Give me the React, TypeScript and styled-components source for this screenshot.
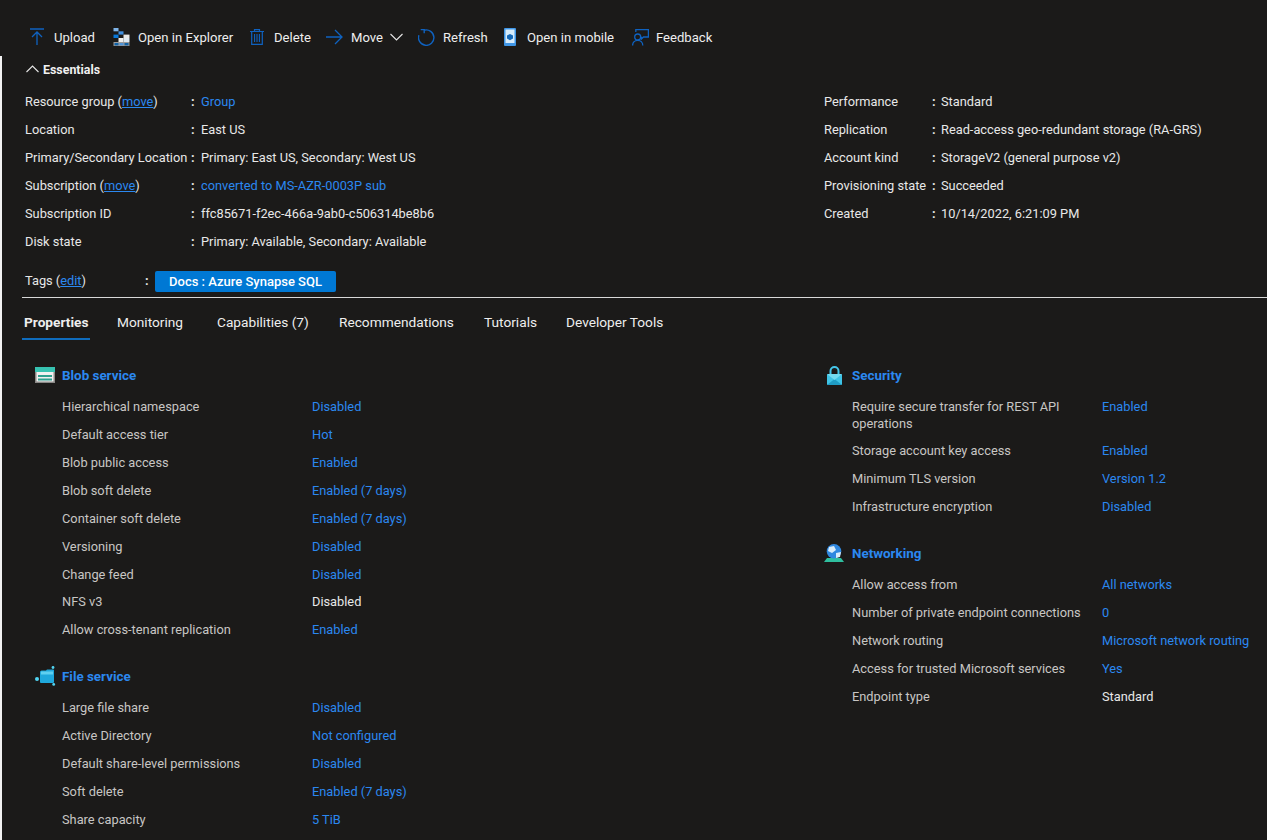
import React from "react"
import styled, { createGlobalStyle } from "styled-components"

const Global = createGlobalStyle`
  html, body {
    margin: 0;
    height: 100%;
    overflow: hidden;
    background: #1b1a19;
  }
  body {
    font-family: Roboto, "Open Sans", "Liberation Sans", sans-serif;
    font-size: 12.8px;
    color: #e6e6e6;
  }
  * { box-sizing: border-box; }
`

const BLUE = "#0f62c0"
const LINK = "#2b88f0"

const Toolbar = styled.div`
  display: flex;
  align-items: center;
  height: 56px;
  padding: 18px 0 0 30px;
`

const ToolButton = styled.div<{ $w: number }>`
  display: flex;
  align-items: center;
  width: ${(p) => p.$w}px;
  height: 38px;
  flex: none;
  font-size: 13.1px;
  color: #eeeeee;
`

const ToolIcon = styled.span<{ $w: number; $gap?: number }>`
  display: flex;
  align-items: center;
  width: ${(p) => p.$w}px;
  margin-left: ${(p) => p.$gap ?? 0}px;
  flex: none;
`

const Body = styled.div`
  border-left: 2px solid #f2f2f2;
  padding-top: 1px;
  height: 784px;
`

const EssentialsHead = styled.div`
  display: flex;
  align-items: center;
  gap: 4px;
  height: 24px;
  padding-left: 24px;
  font-weight: 700;
  font-size: 12.4px;
  color: #f0f0f0;
`

const EssentialsGrid = styled.div`
  display: grid;
  grid-template-columns: 799px 1fr;
  padding: 6px 0 0 23px;
`

const EssColumn = styled.div`
  display: flex;
  flex-direction: column;
`

const EssRow = styled.div<{ $label: number; $colon: number }>`
  display: grid;
  grid-template-columns: ${(p) => p.$label}px ${(p) => p.$colon}px 1fr;
  align-items: center;
  height: 28px;
`

const EssLabel = styled.span`
  white-space: nowrap;
  color: #e8e8e8;
`

const Colon = styled.span`
  font-weight: 700;
`

const A = styled.a`
  color: ${LINK};
`

const Value = styled.span<{ $link?: boolean }>`
  color: ${(p) => (p.$link ? LINK : "#e8e8e8")};
  white-space: nowrap;
`

const TagsRow = styled.div`
  display: flex;
  align-items: center;
  height: 28px;
  margin-top: 12px;
  padding-left: 23px;
`

const TagsLabel = styled.span`
  width: 120px;
  position: relative;
  top: -1px;
`

const TagColon = styled(Colon)`
  width: 10px;
  position: relative;
  top: -1px;
`

const Tag = styled.span`
  display: flex;
  align-items: center;
  justify-content: center;
  width: 181px;
  height: 21px;
  border-radius: 2px;
  background: #0078d4;
  color: #fff;
  font-weight: 500;
  font-size: 13px;
`

const Divider = styled.div`
  height: 1px;
  margin: 2px 0 0 20px;
  background: #d8d8d8;
`

const Tabs = styled.div`
  display: flex;
  height: 42px;
  padding-left: 20px;
`

const Tab = styled.div<{ $active?: boolean; $w: number }>`
  width: ${(p) => p.$w}px;
  flex: none;
  display: flex;
  height: 42px;
  font-size: 13.7px;
  font-weight: ${(p) => (p.$active ? 700 : 400)};
  color: #eeeeee;
  span {
    display: flex;
    align-items: center;
    height: 100%;
    padding: 7px 2px 0;
    border-bottom: 2px solid ${(p) => (p.$active ? "#0f6cbd" : "transparent")};
  }
`

const Columns = styled.div`
  display: grid;
  grid-template-columns: 790px 1fr;
  padding: 23px 0 0 33px;
`

const Section = styled.section`
  margin-bottom: 21px;
`

const SectionHead = styled.div`
  display: flex;
  align-items: center;
  height: 24px;
  margin-bottom: 5px;
  font-weight: 700;
  font-size: 13.4px;
  color: ${LINK};
`

const SectionIcon = styled.span`
  display: flex;
  align-items: center;
  width: 27px;
  flex: none;
`

const PropRow = styled.div<{ $h?: number }>`
  display: grid;
  grid-template-columns: 250px 1fr;
  align-items: ${(p) => (p.$h && p.$h > 40 ? "start" : "center")};
  height: ${(p) => p.$h ?? 28}px;
  margin-left: 27px;
  line-height: 17px;
  padding-top: ${(p) => (p.$h && p.$h > 40 ? "6px" : "0")};
`

const PropLabel = styled.span`
  color: #c8c6c4;
  width: 245px;
`

const UploadIcon = () => (
  <svg width="14" height="18" viewBox="0 0 14 18" fill="none" stroke={BLUE} strokeWidth="1.3">
    <path d="M0 1h14M7 17V4M2 9l5-5 5 5" />
  </svg>
)

const ExplorerIcon = () => (
  <svg width="17" height="18" viewBox="0 0 16 18">
    <rect x="0" y="0" width="5" height="3.3" fill="#7fb4e8" />
    <rect x="5" y="3.3" width="5" height="3.3" fill="#3f8fe0" />
    <rect x="0" y="6.6" width="5" height="3.4" fill="#0a78d8" />
    <rect x="10" y="6.6" width="6" height="3.4" fill="#e8e8e8" />
    <rect x="5" y="10" width="5" height="4" fill="#eeeeee" />
    <rect x="10" y="10" width="6" height="4" fill="#dfe9f2" />
    <rect x="0" y="14" width="16" height="4" fill="#9a9a9a" />
    <rect x="1" y="15" width="4" height="2.4" fill="#0f62a8" />
    <rect x="6" y="15" width="4" height="2.4" fill="#4f94d8" />
    <rect x="11" y="15" width="4" height="2.4" fill="#0f62a8" />
  </svg>
)

const TrashIcon = () => (
  <svg width="14" height="16" viewBox="0 0 14 16" fill="none" stroke={BLUE} strokeWidth="1.2">
    <path d="M0 2.5h14M4.5 2.5V.7h5v1.8M1.7 2.5v12.8h10.6V2.5" />
    <path d="M4.6 5v8M7 5v8M9.4 5v8" strokeWidth="1.1" />
  </svg>
)

const ArrowIcon = () => (
  <svg width="17" height="16" viewBox="0 0 17 16" fill="none" stroke={BLUE} strokeWidth="1.3">
    <path d="M0 8h16M9 1l7 7-7 7" />
  </svg>
)

const Chevron = ({ up }: { up?: boolean }) => (
  <svg width="13" height="8" viewBox="0 0 13 8" fill="none" stroke="#e6e6e6" strokeWidth="1.1">
    <path d={up ? "M.5 7l6-6 6 6" : "M.5 1l6 6 6-6"} />
  </svg>
)

const RefreshIcon = () => (
  <svg width="17" height="17" viewBox="0 0 17 17" fill="none" stroke={BLUE} strokeWidth="1.4">
    <path d="M6.2 1.2A7.7 7.7 0 1 1 .9 6.2" />
    <path d="M2.7 .6h3.5v3.6" />
  </svg>
)

const MobileIcon = () => (
  <svg width="12" height="18" viewBox="0 0 12 18">
    <rect x="0" y="0" width="12" height="18" rx="1" fill="#3f96e6" />
    <rect x="1.5" y="1.5" width="9" height="13.5" fill="#d6ecfb" />
    <path d="M6 6l3 1.6v3L6 12.2 3 10.6v-3z" fill="#1368b8" />
  </svg>
)

const FeedbackIcon = () => (
  <svg width="17" height="17" viewBox="0 0 17 17" fill="none" stroke={BLUE} strokeWidth="1.3">
    <path d="M3.8 3V.6h12.6V8h-4.9l-2 2V7.8" />
    <circle cx="5.7" cy="8" r="3" />
    <path d="M.6 16.5c0-3 2.2-5.2 5.1-5.2s5.1 2.2 5.1 5.2" />
  </svg>
)

const BlobIcon = () => (
  <svg width="20" height="16" viewBox="0 0 20 16">
    <rect x="0" y="0" width="20" height="16" fill="#8a8886" />
    <rect x="0" y="0" width="20" height="5" fill="#37c2b1" />
    <rect x="1.5" y="5" width="17" height="9.5" fill="#f0f0f0" />
    <rect x="3" y="8" width="14" height="2" fill="#2fa08f" />
    <rect x="3" y="11.5" width="14" height="2" fill="#2fa08f" />
  </svg>
)

const FileIcon = () => (
  <svg width="21" height="20" viewBox="0 0 21 20">
    <circle cx="2" cy="13" r="2" fill="#50d4f2" />
    <circle cx="18" cy="1.5" r="1.4" fill="#50d4f2" />
    <circle cx="18.7" cy="18.4" r="1.4" fill="#50d4f2" />
    <path d="M5 6q0-1.5 1.5-1.5H11l1-1h6q1 0 1 1V16q0 1-1 1H6q-1 0-1-1z" fill="#1fa8dc" />
    <path d="M6 5.5h12v3H6z" fill="#5fd0f0" />
  </svg>
)

const LockIcon = () => (
  <svg width="15" height="19" viewBox="0 0 15 19" style={{ marginLeft: 2 }}>
    <path d="M3.5 8V5a4 4 0 0 1 8 0v3" fill="none" stroke="#45c6ea" strokeWidth="2" />
    <rect x="0" y="8" width="15" height="11" rx="1" fill="#3fc4e6" />
    <path d="M0 19l7.5-6 7.5 6z" fill="#1f9cc4" />
    <path d="M0 8l7.5 6 7.5-6z" fill="#73dcf2" />
  </svg>
)

const NetworkIcon = () => (
  <svg width="20" height="18" viewBox="0 0 20 18" style={{ marginLeft: -1 }}>
    <path d="M3 14h14l3 4H0z" fill="#2fbf9f" />
    <circle cx="10" cy="7.3" r="7.3" fill="#2f88e0" />
    <path d="M5 3l5-1 2 4-4 3-4-2zM12 9l5-1-1 5-4 1z" fill="#d8ecfa" />
  </svg>
)

type Prop = { label: string; value: string; plain?: boolean; h?: number }

const blobRows: Prop[] = [
  { label: "Hierarchical namespace", value: "Disabled" },
  { label: "Default access tier", value: "Hot" },
  { label: "Blob public access", value: "Enabled" },
  { label: "Blob soft delete", value: "Enabled (7 days)" },
  { label: "Container soft delete", value: "Enabled (7 days)" },
  { label: "Versioning", value: "Disabled" },
  { label: "Change feed", value: "Disabled" },
  { label: "NFS v3", value: "Disabled", plain: true, h: 27 },
  { label: "Allow cross-tenant replication", value: "Enabled" },
]

const fileRows: Prop[] = [
  { label: "Large file share", value: "Disabled" },
  { label: "Active Directory", value: "Not configured" },
  { label: "Default share-level permissions", value: "Disabled" },
  { label: "Soft delete", value: "Enabled (7 days)" },
  { label: "Share capacity", value: "5 TiB" },
]

const securityRows: Prop[] = [
  { label: "Require secure transfer for REST API operations", value: "Enabled", h: 44 },
  { label: "Storage account key access", value: "Enabled" },
  { label: "Minimum TLS version", value: "Version 1.2" },
  { label: "Infrastructure encryption", value: "Disabled" },
]

const networkRows: Prop[] = [
  { label: "Allow access from", value: "All networks" },
  { label: "Number of private endpoint connections", value: "0" },
  { label: "Network routing", value: "Microsoft network routing" },
  { label: "Access for trusted Microsoft services", value: "Yes" },
  { label: "Endpoint type", value: "Standard", plain: true },
]

const PropSection = ({ icon, title, rows }: { icon: React.ReactNode; title: string; rows: Prop[] }) => (
  <Section>
    <SectionHead>
      <SectionIcon>{icon}</SectionIcon>
      {title}
    </SectionHead>
    {rows.map((r) => (
      <PropRow key={r.label} $h={r.h}>
        <PropLabel>{r.label}</PropLabel>
        <Value $link={!r.plain}>{r.value}</Value>
      </PropRow>
    ))}
  </Section>
)

const App = () => (
  <>
    <Global />
    <Toolbar>
      <ToolButton $w={83}><ToolIcon $w={24}><UploadIcon /></ToolIcon>Upload</ToolButton>
      <ToolButton $w={137}><ToolIcon $w={25}><ExplorerIcon /></ToolIcon>Open in Explorer</ToolButton>
      <ToolButton $w={76}><ToolIcon $w={24}><TrashIcon /></ToolIcon>Delete</ToolButton>
      <ToolButton $w={92}>
        <ToolIcon $w={25}><ArrowIcon /></ToolIcon>
        Move
        <ToolIcon $w={13} $gap={7}><Chevron /></ToolIcon>
      </ToolButton>
      <ToolButton $w={86}><ToolIcon $w={25}><RefreshIcon /></ToolIcon>Refresh</ToolButton>
      <ToolButton $w={128}><ToolIcon $w={23}><MobileIcon /></ToolIcon>Open in mobile</ToolButton>
      <ToolButton $w={100}><ToolIcon $w={24}><FeedbackIcon /></ToolIcon>Feedback</ToolButton>
    </Toolbar>
    <Body>
      <EssentialsHead><Chevron up />Essentials</EssentialsHead>
      <EssentialsGrid>
        <EssColumn>
          <EssRow $label={166} $colon={10}><EssLabel>Resource group (<A href="#">move</A>)</EssLabel><Colon>:</Colon><Value $link>Group</Value></EssRow>
          <EssRow $label={166} $colon={10}><EssLabel>Location</EssLabel><Colon>:</Colon><Value>East US</Value></EssRow>
          <EssRow $label={166} $colon={10}><EssLabel>Primary/Secondary Location</EssLabel><Colon>:</Colon><Value>Primary: East US, Secondary: West US</Value></EssRow>
          <EssRow $label={166} $colon={10}><EssLabel>Subscription (<A href="#">move</A>)</EssLabel><Colon>:</Colon><Value $link>converted to MS-AZR-0003P sub</Value></EssRow>
          <EssRow $label={166} $colon={10}><EssLabel>Subscription ID</EssLabel><Colon>:</Colon><Value>ffc85671-f2ec-466a-9ab0-c506314be8b6</Value></EssRow>
          <EssRow $label={166} $colon={10}><EssLabel>Disk state</EssLabel><Colon>:</Colon><Value>Primary: Available, Secondary: Available</Value></EssRow>
        </EssColumn>
        <EssColumn>
          <EssRow $label={108} $colon={9}><EssLabel>Performance</EssLabel><Colon>:</Colon><Value>Standard</Value></EssRow>
          <EssRow $label={108} $colon={9}><EssLabel>Replication</EssLabel><Colon>:</Colon><Value>Read-access geo-redundant storage (RA-GRS)</Value></EssRow>
          <EssRow $label={108} $colon={9}><EssLabel>Account kind</EssLabel><Colon>:</Colon><Value>StorageV2 (general purpose v2)</Value></EssRow>
          <EssRow $label={108} $colon={9}><EssLabel>Provisioning state</EssLabel><Colon>:</Colon><Value>Succeeded</Value></EssRow>
          <EssRow $label={108} $colon={9}><EssLabel>Created</EssLabel><Colon>:</Colon><Value>10/14/2022, 6:21:09 PM</Value></EssRow>
        </EssColumn>
      </EssentialsGrid>
      <TagsRow>
        <TagsLabel>Tags (<A href="#">edit</A>)</TagsLabel>
        <TagColon>:</TagColon>
        <Tag>Docs : Azure Synapse SQL</Tag>
      </TagsRow>
      <Divider />
      <Tabs>
        <Tab $active $w={93}><span>Properties</span></Tab>
        <Tab $w={100}><span>Monitoring</span></Tab>
        <Tab $w={122}><span>Capabilities (7)</span></Tab>
        <Tab $w={145}><span>Recommendations</span></Tab>
        <Tab $w={82}><span>Tutorials</span></Tab>
        <Tab $w={120}><span>Developer Tools</span></Tab>
      </Tabs>
      <Columns>
        <div>
          <PropSection icon={<BlobIcon />} title="Blob service" rows={blobRows} />
          <PropSection icon={<FileIcon />} title="File service" rows={fileRows} />
        </div>
        <div>
          <PropSection icon={<LockIcon />} title="Security" rows={securityRows} />
          <PropSection icon={<NetworkIcon />} title="Networking" rows={networkRows} />
        </div>
      </Columns>
    </Body>
  </>
)

export default App
